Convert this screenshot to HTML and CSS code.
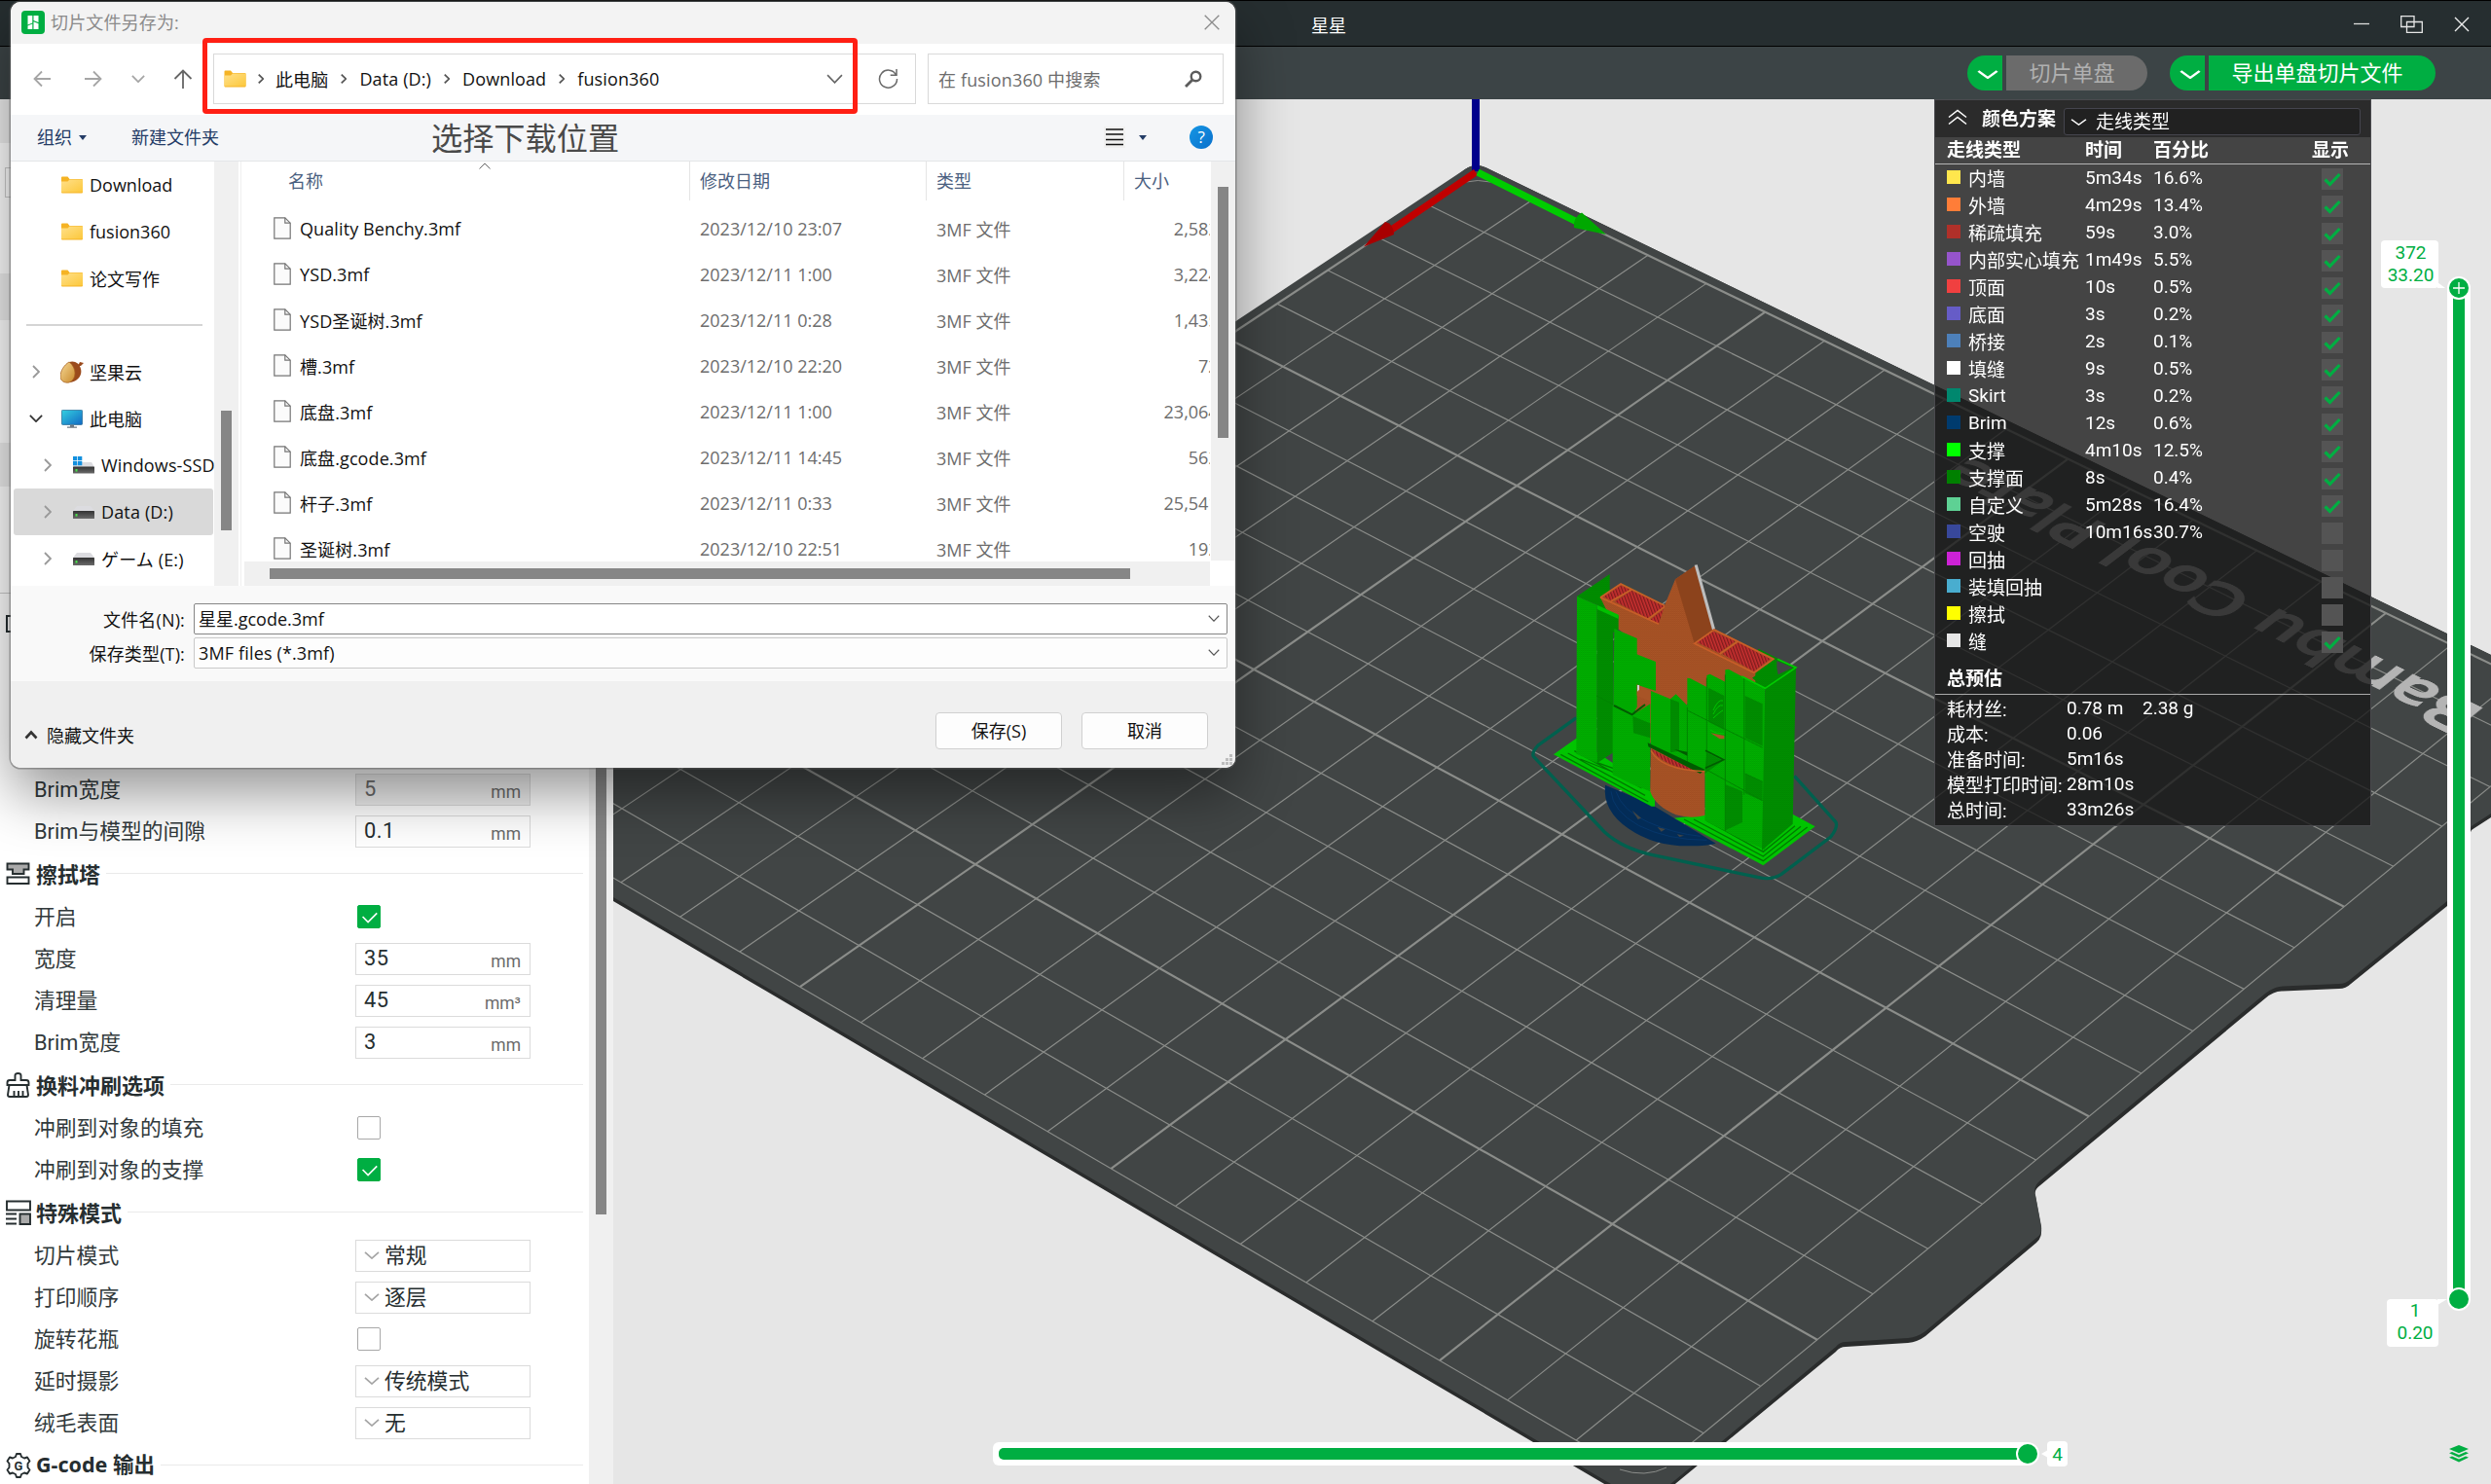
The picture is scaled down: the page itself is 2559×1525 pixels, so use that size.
FILE: index.html
```html
<!DOCTYPE html>
<html lang="zh-CN">
<head>
<meta charset="utf-8">
<title>星星</title>
<link rel="stylesheet" href="styles.css">
</head>
<body>
<svg class="defs" width="0" height="0" aria-hidden="true">
  <defs>
    <linearGradient id="gFolder" x1="0" y1="0" x2="1" y2="1"><stop offset="0" stop-color="#ffe08a"/><stop offset="1" stop-color="#fcc83c"/></linearGradient>
    <linearGradient id="gScreen" x1="0" y1="0" x2="1" y2="1"><stop offset="0" stop-color="#33d1e0"/><stop offset="1" stop-color="#1268c4"/></linearGradient>
    <linearGradient id="gDrive" x1="0" y1="0" x2="0" y2="1"><stop offset="0" stop-color="#333"/><stop offset="1" stop-color="#6a6a6a"/></linearGradient>
    <linearGradient id="gNut" x1="0" y1="0" x2="1" y2="1"><stop offset="0" stop-color="#f6d896"/><stop offset="1" stop-color="#c98a2c"/></linearGradient>
  </defs>
  <symbol id="folder" viewBox="0 0 22 18"><path d="M0 1.5Q0 .5 1 .5H6.5L8.5 3H21Q22 3 22 4V16.5Q22 17.5 21 17.5H1Q0 17.5 0 16.5Z" fill="#f5b324"/><path d="M0 5.5H6.5L8.5 3.6H22V16.5H0Z" fill="url(#gFolder)"/></symbol>
  <symbol id="file" viewBox="0 0 18 23"><path d="M.8.8H11.8L17.2 6.2V22.2H.8Z" fill="#fbfbfb" stroke="#757575" stroke-width="1.2"/><path d="M11.8.8V6.2H17.2" fill="none" stroke="#757575" stroke-width="1.2"/></symbol>
  <symbol id="drive" viewBox="0 0 22 13"><path d="M4 0H18L22 5H0Z" fill="#dcdce0"/><rect y="5" width="22" height="8" rx=".6" fill="url(#gDrive)"/><rect x="2.5" y="8" width="2" height="2.6" fill="#4be04b"/></symbol>
  <symbol id="windrive" viewBox="0 0 22 18"><path d="M6 6H19L22 11H0V9Z" fill="#dcdce0"/><rect y="10.500" width="22" height="7" rx=".6" fill="url(#gDrive)"/><rect x="2.500" y="13" width="2" height="2.600" fill="#4be04b"/><path d="M0 0H4.300V4.300H0ZM5 0H9.300V4.300H5ZM0 5H4.300V9.300H0ZM5 5H9.300V9.300H5Z" fill="#1390df"/></symbol>
  <symbol id="pc" viewBox="0 0 22 19"><rect x=".4" y=".4" width="21.200" height="15" rx="1" fill="url(#gScreen)" stroke="#2b6d96" stroke-width=".8"/><path d="M9 15.500H13V17.500H16V18.700H6V17.500H9Z" fill="#6e7a84"/></symbol>
  <symbol id="nut" viewBox="0 0 24 23"><path d="M9 1C14-1 20 2 21 8 23 15 17 22 9 22 16 17 16 8 9 1Z" fill="#9a4a1c"/><path d="M9 1C4 4 0 10 0 16 0 20 4 23 9 22 17 19 17 7 9 1Z" fill="url(#gNut)" stroke="#a8621f" stroke-width=".8"/><path d="M18 5L20 1 24 2 21 5Z" fill="#9a4a1c"/></symbol>
  <symbol id="v" viewBox="0 0 16 9" preserveAspectRatio="none"><path d="M1 1L8 8 15 1" fill="none" stroke="currentColor" stroke-width="var(--sw,1.5)"/></symbol>
  <symbol id="r" viewBox="0 0 8 14" preserveAspectRatio="none"><path d="M1 1L7 7 1 13" fill="none" stroke="currentColor" stroke-width="var(--sw,1.6)"/></symbol>
  <symbol id="tick" viewBox="0 0 24 24"><path d="M5 12L11 18 21 8" fill="none" stroke="#fff" stroke-width="1.800"/></symbol>
  <symbol id="mark" viewBox="0 0 22 22"><path d="M3.500 11.500L8.500 16.500 18.500 6" fill="none" stroke="#00ae42" stroke-width="3.200"/></symbol>
</svg>

<div class="app">
  <header class="titlebar">
    <span class="doc-name">星星</span>
    <div class="win-ctl">
      <svg width="16" height="18" viewBox="0 0 16 18"><path d="M0 8.500H16" stroke="#ddd" stroke-width="1.300"/></svg>
      <svg width="23" height="18" viewBox="0 0 23 18"><path d="M.7.700H14V11.500H.7ZM6.500 6.500H22.300V17.300H6.500Z" fill="none" stroke="#e6e6e6" stroke-width="1.300"/></svg>
      <svg width="16" height="16" viewBox="0 0 16 16"><path d="M1 1L15 15M15 1L1 15" stroke="#eee" stroke-width="1.400"/></svg>
    </div>
  </header>
  <div class="actionbar">
    <div class="split"><span class="drop"><svg width="22" height="9"><use href="#v"/></svg></span><span class="act off">切片单盘</span></div>
    <div class="split"><span class="drop"><svg width="22" height="9"><use href="#v"/></svg></span><span class="act on">导出单盘切片文件</span></div>
  </div>
  <div class="main">
    <aside class="sidebar">
      <div class="params">
        <div class="hidden-top">
          <div class="band b1"></div><div class="stub-field"></div><div class="band b2"></div><div class="band b2"></div><div class="stub-line"></div><div class="stub-icon"></div>
        </div>
        <div class="row"><label>Brim宽度</label><div class="field dis"><b>5</b><i>mm</i></div></div>
        <div class="row"><label>Brim与模型的间隙</label><div class="field"><b>0.1</b><i>mm</i></div></div>
        <div class="sec"><svg width="26" height="26" viewBox="0 0 26 26" fill="none" stroke="#262e30" stroke-width="1.900"><path d="M1.500 2.500H23.500V8.500H18.500V13H7V8.500H1.500Z" fill="#aaa"/><path d="M1.500 16.500H23.500V23H1.500Z"/></svg><h3>擦拭塔</h3><hr></div>
        <div class="row"><label>开启</label><span class="cb on"><svg><use href="#tick"/></svg></span></div>
        <div class="row"><label>宽度</label><div class="field"><b>35</b><i>mm</i></div></div>
        <div class="row"><label>清理量</label><div class="field"><b>45</b><i>mm³</i></div></div>
        <div class="row"><label>Brim宽度</label><div class="field"><b>3</b><i>mm</i></div></div>
        <div class="sec"><svg width="26" height="26" viewBox="0 0 26 26" fill="none" stroke="#262e30" stroke-width="1.900"><path d="M9.500 8V3Q9.500 1 12.500 1T15.500 3V8H21Q23.500 8 23.500 10.500V13H1.500V10.500Q1.500 8 4 8ZM3.500 13L2 23Q2 25 4 25H21Q23 25 23 23L21.500 13M8.500 25V19M13 25V19M17.500 25V19"/></svg><h3>换料冲刷选项</h3><hr></div>
        <div class="row"><label>冲刷到对象的填充</label><span class="cb"></span></div>
        <div class="row"><label>冲刷到对象的支撑</label><span class="cb on"><svg><use href="#tick"/></svg></span></div>
        <div class="sec"><svg width="26" height="26" viewBox="0 0 26 26" fill="none" stroke="#262e30" stroke-width="1.900"><path d="M1 1.500H25V10.500H1ZM0 14.500H11M0 19.500H11M0 24.500H11"/><path d="M14.500 14.500H25V25H14.500Z" fill="#aaa"/></svg><h3>特殊模式</h3><hr></div>
        <div class="row"><label>切片模式</label><div class="field sel"><svg width="16" height="8"><use href="#v"/></svg><b>常规</b></div></div>
        <div class="row"><label>打印顺序</label><div class="field sel"><svg width="16" height="8"><use href="#v"/></svg><b>逐层</b></div></div>
        <div class="row"><label>旋转花瓶</label><span class="cb"></span></div>
        <div class="row"><label>延时摄影</label><div class="field sel"><svg width="16" height="8"><use href="#v"/></svg><b>传统模式</b></div></div>
        <div class="row"><label>绒毛表面</label><div class="field sel"><svg width="16" height="8"><use href="#v"/></svg><b>无</b></div></div>
        <div class="sec"><svg width="26" height="26" viewBox="0 0 26 26" fill="none" stroke="#262e30" stroke-width="1.900"><path d="M10 4L11 1H15L16 4 19 5.500 22 4.500 24.500 8.500 22.500 11V15L24.500 17.500 22 21.500 19 20.500 16 22 15 25H11L10 22 7 20.500 4 21.500 1.500 17.500 3.500 15V11L1.500 8.500 4 4.500 7 5.500Z" stroke-linejoin="round"/><text x="13" y="18" text-anchor="middle" class="gear-g">G</text></svg><h3 class="lat">G-code 输出</h3><hr></div>
      </div>
      <div class="side-scroll"><div class="side-thumb"></div></div>
    </aside>

    <section class="viewport">
      <svg class="scene" viewBox="630 102 1929 1423">
        <defs>
          <pattern id="pg" width="6" height="6" patternUnits="userSpaceOnUse"><rect width="6" height="6" fill="#00b000"/><path d="M0 1L6 4" stroke="#009800" stroke-width="1.800"/></pattern>
          <pattern id="pd" width="6" height="6" patternUnits="userSpaceOnUse"><rect width="6" height="6" fill="#009000"/><path d="M0 4L6 1" stroke="#008000" stroke-width="1.800"/></pattern>
          <pattern id="po" width="6" height="6" patternUnits="userSpaceOnUse"><rect width="6" height="6" fill="#a85426"/><path d="M0 1L6 4" stroke="#984820" stroke-width="1.800"/></pattern>
          <pattern id="pr" width="9" height="9" patternUnits="userSpaceOnUse" patternTransform="rotate(-20)"><rect width="9" height="9" fill="#c83030"/><rect width="4" height="9" fill="#7c1c1c"/></pattern>
        </defs>
        <path d="M1505 174Q1515 167 1526 172L2559 673V840L2539 853L2530 872L2514 931L2415 1011Q2410 1016 2403 1016L2345 1018.500Q2336 1018 2327 1026L2096 1218Q2089 1223 2091 1229L2097 1262Q2098 1272 2092 1277L1978 1373Q1970 1379 1960 1380L1896 1384Q1890 1384 1886 1389L1716 1529H1655L630 926V845Z" fill="#2a2c2c"/>
        <path d="M1505 174Q1515 167 1526 172L2559 673V836L2539 849L2530 868L2514 926L2415 1006Q2410 1011 2403 1011L2345 1013.500Q2336 1014 2327 1021L2096 1213Q2088 1220 2091 1228L2097 1260Q2098 1269 2092 1272L1978 1368Q1970 1374 1960 1375L1896 1379Q1890 1379 1886 1384L1716 1525H1655L630 922V845L500 840Z" fill="#414545"/>
        <g id="grid" fill="none" stroke="#8b8d8a"></g>
        <path d="M1506 187Q1518 184 1531 187M1664 1510Q1690 1519 1712 1508" fill="none" stroke="#8b8d8a"/>
        <path d="M1516 102V176" stroke="#00008c" stroke-width="8"/>
        <path d="M1516 177L1428 237" stroke="#c00000" stroke-width="7"/>
        <path d="M1401 253.500L1423 228Q1432 230 1432 241Z" fill="#a80000"/>
        <path d="M1518 177L1620 228" stroke="#00cc00" stroke-width="7"/>
        <path d="M1650 241L1625 218.500Q1616 223 1617 234Z" fill="#00a800"/>
        <g transform="translate(1540 550) scale(.33333)">
          <path d="M238 563L120 648Q100 670 106 682L325 915Q380 965 470 985L800 1055Q840 1064 870 1045L1022 930Q1045 900 1038 885L910 742" fill="none" stroke="#00604e" stroke-width="10"/>
          <path d="M327 770Q318 850 400 905Q480 960 590 958Q640 958 668 950L470 830Z" fill="#032c57"/>
          <path d="M345 790Q350 850 430 895Q520 940 640 940M360 790Q380 850 460 885Q540 920 620 928" fill="none" stroke="#06366a" stroke-width="3"/>
          <path d="M410 848L438 872 428 876ZM488 900L512 906 500 914ZM548 922L570 926 556 930Z" fill="#414545"/>
          <path d="M168 676L238 626L480 790V836L470 836Z" fill="#00c400"/>
          <path d="M190 676L460 822M212 672L450 802M232 665L440 780M250 690L440 765M300 700L440 750" stroke="#007a00" stroke-width="4"/>
          <path d="M540 872L640 860 905 860 974 898 814 1018Z" fill="#00c400"/>
          <path d="M570 876L814 1004 950 900M600 876L814 990 930 898M640 880L814 976 912 896" fill="none" stroke="#007a00" stroke-width="4"/>
          <path d="M240 188L341 120V250L302 215Z" fill="url(#pd)"/>
          <path d="M380 150L450 185 450 200 390 170Z" fill="#00b000"/>
          <path d="M800 350L915 408 820 472 750 440Z" fill="url(#pd)"/>
          <path d="M850 385L905 408 860 430Z" fill="#414545"/>
          <path d="M312 192L375 150 510 217 543 136 607 92 663 291 735 325 850 380 790 425V520H580L500 640H420V330L355 280Z" fill="url(#po)"/>
          <path d="M543 136L607 92 660 292 602 334Z" fill="#8c431c"/>
          <path d="M602 92L611 91 666 289 657 292Z" fill="#bdbdbd"/>
          <path d="M322 190L375 155 403 167 350 203Z" fill="url(#pr)"/><path d="M357 205L408 170 510 220 458 256Z" fill="url(#pr)"/><path d="M466 260L507 228 492 272Z" fill="url(#pr)"/>
          <path d="M610 330L660 296 728 327 678 363Z" fill="url(#pr)"/><path d="M688 366L737 330 836 382 785 420Z" fill="url(#pr)"/>
          <path d="M312 192L375 150 510 217M345 203L408 168M312 192L492 274M458 260L510 220M602 334L785 424 845 382 663 291ZM680 366L735 328" fill="none" stroke="#c85e28" stroke-width="5"/>
          <path d="M240 188L302 215V703L238 674Z" fill="url(#pg)"/>
          <path d="M302 220L368 248V290L352 300V670L302 703Z" fill="url(#pd)"/>
          <path d="M302 215L368 245V258L302 228Z" fill="#00c000"/>
          <path d="M355 288L425 318V530L410 555 352 525Z" fill="url(#pg)"/>
          <path d="M420 365L483 390V480L420 460Z" fill="url(#pg)"/>
          <path d="M425 460L466 480V512L425 495Z" fill="#a85426"/><path d="M426 462H432V476L426 482Z" fill="#d0d0d0"/>
          <path d="M350 525L410 555 466 520V790L410 768 350 738Z" fill="url(#pg)"/>
          <path d="M354 525L410 553 450 522" fill="none" stroke="#005c00" stroke-width="6"/>
          <path d="M412 558L466 580V625L414 610Z" fill="url(#pd)"/>
          <path d="M468 480L528 505 545 490 580 525V440L590 442 640 468V432L650 428 697 452V415L707 413 758 440 820 472V970L748 938 697 912 634 880V740L580 700 468 655Z" fill="url(#pg)"/>
          <path d="M528 505L555 515V665L528 670ZM645 470L694 495V600L645 575ZM758 495L812 520V650L758 625ZM697 768L750 790V885L697 910ZM758 735L812 760V820L758 795ZM634 735L690 695 640 670Z" fill="url(#pd)"/>
          <path d="M580 540L640 570 812 655M697 610V912M640 440V720M697 430V620M634 720L812 818M580 530V700M755 440V800M300 495L352 522M758 735L812 760" fill="none" stroke="#008400" stroke-width="3"/>
          <path d="M660 540Q675 505 690 510M660 552Q675 520 690 525M660 564Q680 545 690 540M650 600Q670 615 694 612" fill="none" stroke="#00c400" stroke-width="3"/>
          <path d="M652 610L694 618V628H680Z" fill="#a85426"/>
          <path d="M820 472L915 408 905 890 810 972Z" fill="url(#pd)"/>
          <path d="M780 440L856 385V435L820 472Z" fill="url(#pd)"/>
          <path d="M748 435L820 472 915 408 858 382" fill="none" stroke="#00cc00" stroke-width="5"/>
          <path d="M468 655L634 730V864Q590 875 545 862Q480 835 466 790Z" fill="url(#po)"/>
          <path d="M470 660L600 724Q520 715 478 672Z" fill="url(#pr)"/>
          <path d="M458 640L634 722 620 735 460 652ZM540 660L580 668V680Z" fill="#005c00"/>
          <path d="M468 664Q500 724 634 728" fill="none" stroke="#c85e28" stroke-width="4"/>
          <path d="M636 664L692 692 636 718" fill="none" stroke="#005c00" stroke-width="5"/>
        </g>
      </svg>
      <div class="plate-text" id="plateText">Bambu Cool Plate</div>

      <div class="legend">
        <div class="lg-head"><svg width="20" height="17" viewBox="0 0 20 17" fill="none" stroke="#fff" stroke-width="1.500"><path d="M1 8.500L10 1.500 19 8.500M1 15.500L10 8.500 19 15.500"/></svg><strong>颜色方案</strong><div class="lg-drop"><svg width="17" height="7"><use href="#v"/></svg>走线类型</div></div>
        <div class="lg-row lg-th"><span>走线类型</span><span>时间</span><span>百分比</span><span>显示</span></div>
        <div id="legendRows"></div>
        <div class="lg-total">总预估</div>
        <div class="lg-est"><span>耗材丝:</span><span>0.78 m</span><span>2.38 g</span></div>
        <div class="lg-est"><span>成本:</span><span>0.06</span></div>
        <div class="lg-est"><span>准备时间:</span><span>5m16s</span></div>
        <div class="lg-est"><span>模型打印时间:</span><span>28m10s</span></div>
        <div class="lg-est"><span>总时间:</span><span>33m26s</span></div>
      </div>

      <div class="vslider"><div class="fill"></div><span class="knob top"><svg width="20" height="20" viewBox="0 0 20 20"><path d="M10 4V16M4 10H16" stroke="#fff" stroke-width="1.300"/></svg></span><span class="knob bot"></span></div>
      <div class="tip tip-top"><span>372</span><span>33.20</span></div>
      <div class="tip tip-bot"><span>1</span><span>0.20</span></div>
      <div class="hslider"><div class="fill"></div><span class="knob end"></span></div>
      <div class="tip tip-h">4</div>
      <svg class="layers" viewBox="0 0 20 18" fill="#00ae42"><path d="M10 0L20 4 10 8.200 0 4Z"/><path d="M0 8.300L3 7 10 10 17 7 20 8.300 10 12.700Z"/><path d="M0 12.800L3 11.500 10 14.500 17 11.500 20 12.800 10 17.500Z"/></svg>
    </section>
  </div>
</div>

<div class="dialog">
  <div class="dlg-title"><svg width="24" height="24" viewBox="0 0 24 24"><rect width="24" height="24" rx="4" fill="#00ae42"/><path d="M6.500 5H11.300V12.500L6.500 14.400ZM12.500 5H17.500V12L12.500 10ZM6.500 15.500L11.300 13.600V19H6.500ZM12.500 11.300L17.500 13.200V19H12.500Z" fill="#fff"/></svg><span>切片文件另存为:</span><svg class="dlg-x" width="16" height="16" viewBox="0 0 16 16"><path d="M.7.700L15.300 15.300M15.300.7L.7 15.300" stroke="#8a8a8a" stroke-width="1.300"/></svg></div>
  <div class="dlg-nav">
    <svg class="n1" width="18" height="18" viewBox="0 0 18 18"><path d="M18 9H1.500M9 1.500L1.500 9 9 16.500"/></svg>
    <svg class="n2" width="18" height="18" viewBox="0 0 18 18"><path d="M0 9H16.500M9 1.500L16.500 9 9 16.500"/></svg>
    <svg class="n3" width="14" height="8"><use href="#v"/></svg>
    <svg class="n4" width="20" height="20" viewBox="0 0 20 20"><path d="M10 20V1.500M1.500 10L10 1.500 18.500 10"/></svg>
    <div class="addr">
      <svg width="23" height="18"><use href="#folder"/></svg><svg class="sep" width="6" height="10"><use href="#r"/></svg><span>此电脑</span><svg class="sep" width="6" height="10"><use href="#r"/></svg><span>Data (D:)</span><svg class="sep" width="6" height="10"><use href="#r"/></svg><span>Download</span><svg class="sep" width="6" height="10"><use href="#r"/></svg><span>fusion360</span>
      <svg class="addr-v" width="17" height="10"><use href="#v"/></svg>
      <svg class="reload" width="21" height="21" viewBox="0 0 21 21"><path d="M18.500 7A9 9 0 1 0 19.500 11M19 1V7.300H12.700" fill="none" stroke="#6a6a6a" stroke-width="1.500"/></svg>
    </div>
    <div class="search"><span>在 fusion360 中搜索</span><svg width="18" height="18" viewBox="0 0 18 18"><circle cx="11.500" cy="6.500" r="4.800" fill="none" stroke="#5c5c5c" stroke-width="2.400"/><path d="M8 10L1 17" stroke="#5c5c5c" stroke-width="2.800"/></svg></div>
  </div>
  <div class="dlg-tools">
    <span class="org">组织</span><i class="tri"></i><span class="newf">新建文件夹</span><span class="note">选择下载位置</span>
    <svg class="listic" width="22" height="22" viewBox="0 0 22 22"><path d="M2 3H20M2 8H20M2 13.500H20M2 18.500H20" stroke="#111" stroke-width="1.300"/></svg><i class="tri t2"></i><span class="help">?</span>
  </div>
  <div class="dlg-body">
    <div class="tree">
      <div class="ti"><svg width="22" height="18"><use href="#folder"/></svg>Download</div>
      <div class="ti"><svg width="22" height="18"><use href="#folder"/></svg>fusion360</div>
      <div class="ti"><svg width="22" height="18"><use href="#folder"/></svg>论文写作</div>
      <div class="ti line"><hr></div>
      <div class="ti ex"><svg class="ar" width="8" height="14"><use href="#r"/></svg><svg width="24" height="23" class="nut"><use href="#nut"/></svg>坚果云</div>
      <div class="ti ex open"><svg class="ar" width="14" height="8"><use href="#v"/></svg><svg width="22" height="19"><use href="#pc"/></svg>此电脑</div>
      <div class="ti ex sub"><svg class="ar" width="8" height="14"><use href="#r"/></svg><svg width="22" height="18"><use href="#windrive"/></svg>Windows-SSD</div>
      <div class="ti ex sub cur"><svg class="ar" width="8" height="14"><use href="#r"/></svg><svg width="22" height="13"><use href="#drive"/></svg>Data (D:)</div>
      <div class="ti ex sub"><svg class="ar" width="8" height="14"><use href="#r"/></svg><svg width="22" height="13"><use href="#drive"/></svg>ゲーム (E:)</div>
    </div>
    <div class="tree-scroll"><div></div></div>
    <div class="files">
      <div class="f-main">
        <div class="f-grid f-head"><span>名称<svg class="sort" width="12" height="7" viewBox="0 0 12 7"><path d="M.5 6.500L6 1 11.500 6.500" fill="none" stroke="#666"/></svg></span><span>修改日期</span><span>类型</span><span>大小</span></div>
        <div class="f-list" id="files"></div>
        <div class="h-scroll"><div></div></div>
      </div>
      <div class="v-scroll"><div></div></div>
    </div>
  </div>
  <div class="dlg-name">
    <label>文件名(N):</label><div class="inp">星星.gcode.3mf<svg width="12" height="7"><use href="#v"/></svg></div>
    <label>保存类型(T):</label><div class="inp lite">3MF files (*.3mf)<svg width="12" height="7"><use href="#v"/></svg></div>
  </div>
  <div class="dlg-foot"><svg width="14" height="10" viewBox="0 0 14 10"><path d="M1.500 8.500L7 2.500 12.500 8.500" fill="none" stroke="#333" stroke-width="2.600"/></svg><span>隐藏文件夹</span><button>保存(S)</button><button>取消</button>
    <svg class="grip" width="12" height="12" viewBox="0 0 12 12" fill="#bdbdbd"><path d="M8 0H11V3H8ZM4 4H7V7H4ZM8 4H11V7H8ZM0 8H3V11H0ZM4 8H7V11H4ZM8 8H11V11H8Z"/></svg></div>
  <div class="redbox"></div>
</div>
<script src="script.js"></script>
</body>
</html>
```
FILE: styles.css
```css
* { box-sizing: border-box; }
body { margin: 0; width: 2559px; height: 1525px; overflow: hidden; position: relative; background: #e6e6e6; font-family: Roboto, "Noto Sans CJK SC", sans-serif; }
svg { display: block; flex: none; }
svg.defs { position: absolute; }
span, label, h3, strong { white-space: nowrap; }
.app { display: flex; flex-direction: column; height: 1525px; }

/* title and action bars */
.titlebar { height: 48px; background: #262e30; border-top: 1px solid #000; border-bottom: 1px solid #000; display: flex; align-items: center; justify-content: space-between; padding: 1px 22px 0 1347px; color: #fff; font-size: 18px; }
.win-ctl { display: flex; align-items: center; gap: 32px; }
.actionbar { height: 54px; background: #3c4446; display: flex; align-items: center; justify-content: flex-end; gap: 23px; padding-right: 57px; }
.split { display: flex; gap: 4px; height: 36px; }
.drop { width: 36px; background: #00ae42; border-radius: 18px 0 0 18px; display: flex; align-items: center; justify-content: center; padding: 3px 0 0 6px; color: #fff; --sw: 2; }
.act { display: flex; align-items: center; justify-content: center; border-radius: 0 18px 18px 0; font-size: 22px; padding-bottom: 4px; }
.act.off { width: 145px; background: #6b6b6b; color: #b0b0b0; padding-right: 10px; }
.act.on { width: 233px; background: #00ae42; color: #fff; padding-right: 10px; }
.main { flex: 1; display: flex; min-height: 0; }

/* parameter sidebar */
.sidebar { width: 630px; display: flex; background: #fff; overflow: hidden; }
.params { width: 605px; flex: none; }
.hidden-top { height: 687px; background: #fff; }
.band { background: #efefef; height: 48px; margin-bottom: 126px; }
.band.b1 { height: 45px; margin-bottom: 25px; }
.stub-field { height: 31px; margin: 0 20px 78px 5px; border: 1px solid #ccc; }
.band.b2 + .band.b2 { margin-bottom: 0; height: 45px; }
.stub-line { height: 1px; background: #ccc; margin-top: 109px; }
.stub-icon { width: 20px; height: 18px; border: 2px solid #262e30; margin: 22px 0 0 6px; }
.row { height: 43px; display: flex; align-items: center; padding-left: 35px; }
.row label { width: 330px; font-size: 21.800px; color: #323a3c; padding-bottom: 2px; }
.field { width: 180px; height: 33px; margin-top: 1px; border: 1px solid #dbdbdb; display: flex; align-items: center; justify-content: space-between; padding: 0 9px 0 8px; color: #262e30; font-size: 21.800px; }
.field b { font-weight: 400; padding-bottom: 1px; letter-spacing: .5px; }
.field i { font-style: normal; font-size: 17.500px; color: #6b6b6b; padding-top: 5px; }
.field.dis { background: #f0f0f0; }
.field.dis b { color: #6b6b6b; }
.field.sel { justify-content: flex-start; gap: 5px; padding-left: 8px; }
.field.sel b { letter-spacing: 0; padding-bottom: 3px; }
.field.sel svg { color: #a5a5a5; --sw: 1.700; }
.cb { width: 24px; height: 24px; margin-left: 2px; border: 1px solid #a8a8a8; border-radius: 2px; background: #fff; }
.cb.on { background: #00ae42; border-color: #00ae42; }
.cb svg { width: 22px; height: 22px; }
.sec { height: 45px; display: flex; align-items: center; padding: 0 6px; }
.sec h3 { margin: 0 6px 0 5px; font-size: 22px; font-weight: 700; color: #262e30; padding-bottom: 1px; }
.sec h3.lat { font-family: "Noto Sans", "Noto Sans CJK SC", sans-serif; font-size: 21.500px; line-height: 32px; }
.sec hr { flex: 1; border: 0; height: 1px; background: #eaeaea; margin: 0; }
.gear-g { font: 700 13px Roboto, sans-serif; fill: #262e30; stroke: none; }
.side-scroll { width: 25px; background: #f0f0f0; padding-left: 7px; }
.side-thumb { width: 11px; height: 1146px; background: #868686; }

/* preview */
.viewport { flex: 1; position: relative; background: #e6e6e6; overflow: hidden; }
.scene { width: 1929px; height: 1423px; }
.plate-text { position: absolute; left: 0; top: 0; transform-origin: 0 0; font: 400 88px/88px "DejaVu Sans", sans-serif; -webkit-text-stroke: 4px #b4b4b4; color: #b4b4b4; white-space: nowrap; }
.legend { position: absolute; left: 1357px; top: 0; width: 449px; height: 747px; background: rgba(24,24,24,.79); border: 1px solid #4a4a4e; color: #fff; font-size: 19px; }
.lg-head { height: 38px; background: rgba(24,24,24,.55); display: flex; align-items: center; padding: 0 10px 3px 13px; }
.lg-head strong { margin: 0 8px 0 15px; }
.lg-drop { flex: 1; height: 28px; margin-top: 8px; border: 1px solid #45454e; border-radius: 3px; background: #212121; display: flex; align-items: center; gap: 9px; padding: 0 0 2px 6px; }
.lg-drop svg { margin-top: 4px; }
.lg-row { height: 28px; display: grid; grid-template-columns: 22px 120px 70px 173px 22px; align-items: center; padding-left: 12px; white-space: nowrap; }
.lg-row span { margin-top: -3px; }
.lg-row i { width: 14px; height: 14px; margin-top: -4px; }
.lg-row em { width: 22px; height: 22px; background: #545454; margin-top: -1px; }
.lg-row em svg { width: 22px; height: 22px; }
.lg-th { height: 28px; font-weight: 700; grid-template-columns: 142px 70px 163px 60px; border-bottom: 1px solid #b5b5b5; margin-bottom: 1px; padding-bottom: 2px; }
.lg-total { font-weight: 700; height: 40px; padding: 10px 0 0 12px; line-height: 28px; border-bottom: 1px solid #aaa; margin-bottom: 0; }
.lg-est { height: 26px; display: grid; grid-template-columns: 123px 78px 80px; align-items: center; padding-left: 12px; }
.vslider { position: absolute; left: 1884px; top: 194px; width: 24px; height: 1039px; background: #fff; }
.vslider .fill { position: absolute; left: 6px; width: 12px; top: 0; bottom: 0; background: #00ae42; }
.knob { position: absolute; width: 24px; height: 24px; border-radius: 50%; border: 2px solid #fff; background: #00ae42; }
.knob.top { left: 0; top: -12px; }
.knob.bot { left: 0; bottom: -12px; }
.hslider { position: absolute; left: 390px; top: 1380px; width: 1067px; height: 24px; background: #fff; border-radius: 6px; }
.hslider .fill { position: absolute; left: 6px; right: 4px; top: 6px; height: 12px; border-radius: 5px; background: #00ae42; }
.knob.end { right: -8px; top: 0; }
.tip { position: absolute; background: #fff; border-radius: 4px; color: #00ae42; font-size: 19px; display: flex; flex-direction: column; align-items: center; justify-content: center; }
.tip::after { content: ""; position: absolute; background: #fff; }
.tip-top { left: 1816px; top: 145px; width: 59px; height: 49px; line-height: 23px; padding: 0 0 2px 2px; }
.tip-top::after { right: -7px; bottom: 0; width: 8px; height: 6px; clip-path: polygon(0 0, 100% 100%, 0 100%); }
.tip-bot { left: 1822px; top: 1233px; width: 53px; height: 49px; line-height: 23px; padding: 0 0 3px 5px; }
.tip-bot::after { right: -9px; top: 0; width: 10px; height: 6px; clip-path: polygon(0 0, 100% 0, 0 100%); }
.tip-h { left: 1473px; top: 1379px; width: 21px; height: 26px; }
.tip-h::after { left: -6px; top: 9px; width: 7px; height: 8px; clip-path: polygon(0 50%, 100% 0, 100% 100%); }
.layers { position: absolute; left: 1886px; top: 1383px; width: 20px; height: 18px; }

/* save dialog */
.dialog { position: absolute; left: 11px; top: 2px; width: 1258px; height: 787px; border-radius: 10px; background: #fff; font-family: "Open Sans", "Noto Sans CJK SC", sans-serif; font-size: 18px; color: #111; box-shadow: 0 0 0 1.500px rgba(90,90,90,.5), 0 26px 60px rgba(0,0,0,.42); display: flex; flex-direction: column; }
.dlg-title { height: 43px; background: #f3f3f3; border-radius: 10px 10px 0 0; display: flex; align-items: center; gap: 6px; padding: 0 16px 3px 11px; color: #8b8b8b; }
.dlg-title svg { margin-top: 2px; }
.dlg-title span { letter-spacing: .15px; }
.dlg-x { margin-left: auto; }
.dlg-nav { height: 73px; display: flex; align-items: center; padding: 0 12px 1px 24px; }
.dlg-nav > svg { fill: none; stroke: #a5a5a5; stroke-width: 1.800; color: #a5a5a5; --sw: 2; }
.dlg-nav > .n1 { margin-left: -1px; }
.dlg-nav .n2 { margin-left: 35px; } .dlg-nav .n3 { margin-left: 30px; } .dlg-nav > .n4 { margin-left: 29px; stroke: #666; }
.addr { margin-left: 21px; width: 722px; height: 52px; border: 1px solid #d9d9d9; display: flex; align-items: center; padding: 0 0 1px 10px; }
.addr .sep { margin: 0 13px; color: #555; --sw: 2.400; }
.addr span { letter-spacing: .12px; }
.addr svg:first-child + .sep { margin: 0 12px; }
.addr-v { margin-left: auto; color: #666; }
.reload { margin: 0 17px 0 36px; }
.search { margin-left: 12px; width: 304px; height: 52px; border: 1px solid #d9d9d9; display: flex; align-items: center; justify-content: space-between; padding: 0 21px 0 10px; color: #6d6d6d; letter-spacing: .15px; }
.dlg-tools { height: 48px; background: #f5f6f8; border-bottom: 1px solid #e4e6e8; display: flex; align-items: center; padding-left: 27px; color: #243c66; }
.org, .newf { padding-bottom: 3px; }
.tri { border: 4px solid transparent; border-top: 5px solid #243c66; border-bottom: 0; margin-left: 7px; }
.newf { margin-left: 46px; }
.note { font-size: 32.200px; line-height: 40px; color: #4a4a4a; margin-left: 218px; }
.listic { margin-left: 498px; background: #f0f0f0; margin-top: -2px; }
.t2 { margin-left: 14px; }
.help { margin: -2px 0 0 44px; width: 24px; height: 24px; border-radius: 50%; background: linear-gradient(135deg, #1597e5, #0a6fcb); color: #fff; text-align: center; line-height: 24px; font-size: 17px; }
.dlg-body { height: 436px; display: flex; }
.tree { width: 209px; overflow: hidden; }
.ti { height: 48px; display: flex; align-items: center; gap: 7px; padding-left: 52px; white-space: nowrap; position: relative; }
.ti.line { padding: 0 12px 0 16px; }
.ti hr { width: 100%; border: 0; height: 2px; background: #d5d5d5; margin: 0; }
.ti.ex { padding-left: 22px; }
.ti.ex .ar { color: #999; margin-right: 15px; --sw: 1.800; }
.ti.ex .nut { margin-right: -1px; margin-left: -1px; }
.ti.ex.open { padding-left: 19px; }
.ti.open .ar { color: #333; margin-right: 12px; --sw: 2; }
.ti.ex.sub { padding-left: 34px; letter-spacing: .15px; }
.ti.ex.cur { margin: 0 1px 0 3px; padding-left: 31px; background: #d9d9d9; border-radius: 3px; }
.tree-scroll { width: 25px; background: #f0f0f0; padding: 256px 0 0 7px; }
.tree-scroll div { width: 11px; height: 123px; background: #868686; }
.files { flex: 1; display: flex; margin-left: 2px; border-left: 1px solid #f0f0f0; min-width: 0; }
.f-main { width: 995px; display: flex; flex-direction: column; overflow: hidden; }
.f-grid { display: grid; grid-template-columns: 461px 243px 203px 88px; align-items: center; white-space: nowrap; }
.f-head { height: 40px; color: #4a6080; }
.f-head span { height: 40px; line-height: 41px; padding-left: 10px; border-right: 1px solid #e5e5e5; position: relative; }
.f-head span:first-child { padding-left: 48px; }
.f-head span:last-child { border: 0; }
.sort { position: absolute; left: 244px; top: 1px; }
.f-list { height: 371px; overflow: hidden; padding-top: 5px; }
.f-row { height: 47px; color: #6d6d6d; }
.f-row > * { padding-left: 10px; }
.f-row .nm { color: #111; display: flex; align-items: center; gap: 9px; padding-left: 33px; letter-spacing: .1px; }
.f-row .sz { display: flex; justify-content: flex-end; margin-right: -36px; }
.h-scroll { height: 25px; margin-left: 3px; background: #f0f0f0; padding: 7px 0 0 26px; }
.h-scroll div { width: 884px; height: 11px; background: #868686; }
.v-scroll { width: 25px; height: 410px; background: #f0f0f0; padding: 26px 0 0 7px; margin-left: 1px; }
.v-scroll div { width: 11px; height: 258px; background: #868686; }
.dlg-name { height: 98px; background: #f9f9f9; display: grid; grid-template-columns: 179px 1062px; grid-template-rows: 32px 32px; gap: 3px 9px; padding-top: 18px; align-items: center; }
.dlg-name label { text-align: right; letter-spacing: .15px; }
.inp { height: 32px; background: #fff; border: 1px solid #868686; border-radius: 2px; display: flex; align-items: center; justify-content: space-between; padding: 0 7px 2px 4px; }
.inp svg { color: #555; }
.inp.lite { border-color: #c9c9c9; background: #fdfdfd; letter-spacing: .15px; padding-bottom: 1px; }
.dlg-foot { flex: 1; background: #f0f0f0; border-radius: 0 0 10px 10px; display: flex; align-items: center; padding: 20px 0 0 14px; position: relative; }
.dlg-foot span { margin: 0 auto 0 9px; }
.dlg-foot button { width: 130px; height: 38px; border: 1px solid #d0d0d0; border-radius: 4px; background: #fdfdfd; font: inherit; color: #111; margin: -7px 20px 0 0; padding: 0 0 2px; }
.dlg-foot button:last-of-type { margin-right: 28px; }
.grip { position: absolute; right: 2px; bottom: 2px; }
.redbox { position: absolute; left: 197px; top: 37px; width: 673px; height: 78px; border: 5px solid #ff1f14; border-radius: 4px; }
```
FILE: script.js
```js
// Camera projection of the 180 x 180 mm bed; x and y are in centimetres.
const M = { a: 521.64, b: -1073.33, c: 1813.3, d: 279.47, e: 592.51, f: 320.7, g: -0.04735, h: -0.09958 };
function project(x, y) {
  const u = (y - 5) / 10, v = x / 18, w = 1 + M.g * u + M.h * v;
  return [(M.a * u + M.b * v + M.c) / w, (M.d * u + M.e * v + M.f) / w];
}
const NS = 'http://www.w3.org/2000/svg';
const grid = document.getElementById('grid');
function line(p, q, bold) {
  const l = document.createElementNS(NS, 'path');
  l.setAttribute('d', 'M' + p.join(' ') + 'L' + q.join(' '));
  l.setAttribute('stroke-width', bold ? 2.2 : 1.2);
  grid.appendChild(l);
}
for (let i = 0; i <= 18; i++) {
  line(project(i, i === 0 ? 1 : i === 18 ? 0.5 : 0), project(i, i === 18 ? 17.3 : 18), i % 5 === 0);
  line(project(i === 0 ? 1 : 0, i), project(i === 18 ? 17.3 : 18, i), i % 5 === 0);
}

// Lettering lies on the bed: local px (p right, q down) to bed coordinates, then to the screen.
const label = document.getElementById('plateText');
const k = 8.1 / label.offsetWidth, y0 = 17.1, x0 = 1.56, kq = 0.0102;
const ux = -k / 10, vq = -kq / 18, u0 = (y0 - 5) / 10, v0 = x0 / 18;
const H = (a, b, c) => [a * ux, b * vq, a * u0 + b * v0 + c];
const W = H(M.g, M.h, 1);
let X = H(M.a, M.b, M.c), Y = H(M.d, M.e, M.f);
X = X.map((n, i) => n - 630 * W[i]);
Y = Y.map((n, i) => n - 102 * W[i]);
const s = W[2];
label.style.transform = 'matrix3d(' + [X[0], Y[0], 0, W[0], X[1], Y[1], 0, W[1], 0, 0, s, 0, X[2], Y[2], 0, W[2]].map(n => (n / s).toFixed(9)).join(',') + ')';

const types = [
  ['#ffe64d', '内墙', '5m34s', '16.6%', 1], ['#ff7d38', '外墙', '4m29s', '13.4%', 1], ['#b03029', '稀疏填充', '59s', '3.0%', 1],
  ['#9654cc', '内部实心填充', '1m49s', '5.5%', 1], ['#f04040', '顶面', '10s', '0.5%', 1], ['#665cc7', '底面', '3s', '0.2%', 1],
  ['#4d80ba', '桥接', '2s', '0.1%', 1], ['#ffffff', '填缝', '9s', '0.5%', 1], ['#00876e', 'Skirt', '3s', '0.2%', 1],
  ['#003b6e', 'Brim', '12s', '0.6%', 1], ['#00ff00', '支撑', '4m10s', '12.5%', 1], ['#008000', '支撑面', '8s', '0.4%', 1],
  ['#5ed194', '自定义', '5m28s', '16.4%', 1], ['#38489b', '空驶', '10m16s', '30.7%', 0], ['#cd22d6', '回抽', '', '', 0],
  ['#49adcf', '装填回抽', '', '', 0], ['#ffff00', '擦拭', '', '', 0], ['#e6e6e6', '缝', '', '', 1]
];
document.getElementById('legendRows').innerHTML = types.map(t =>
  `<div class="lg-row"><i style="background:${t[0]}"></i><span>${t[1]}</span><span>${t[2]}</span><span>${t[3]}</span><em>${t[4] ? '<svg><use href="#mark"/></svg>' : ''}</em></div>`).join('');

const files = [
  ['Quality Benchy.3mf', '2023/12/10 23:07', '2,582'], ['YSD.3mf', '2023/12/11 1:00', '3,224'], ['YSD圣诞树.3mf', '2023/12/11 0:28', '1,435'],
  ['槽.3mf', '2023/12/10 22:20', '72'], ['底盘.3mf', '2023/12/11 1:00', '23,064'], ['底盘.gcode.3mf', '2023/12/11 14:45', '562'],
  ['杆子.3mf', '2023/12/11 0:33', '25,541'], ['圣诞树.3mf', '2023/12/10 22:51', '192']
];
document.getElementById('files').innerHTML = files.map(f =>
  `<div class="f-grid f-row"><span class="nm"><svg width="18" height="23"><use href="#file"/></svg>${f[0]}</span><span>${f[1]}</span><span>3MF 文件</span><span class="sz">${f[2]} KB</span></div>`).join('');
```
